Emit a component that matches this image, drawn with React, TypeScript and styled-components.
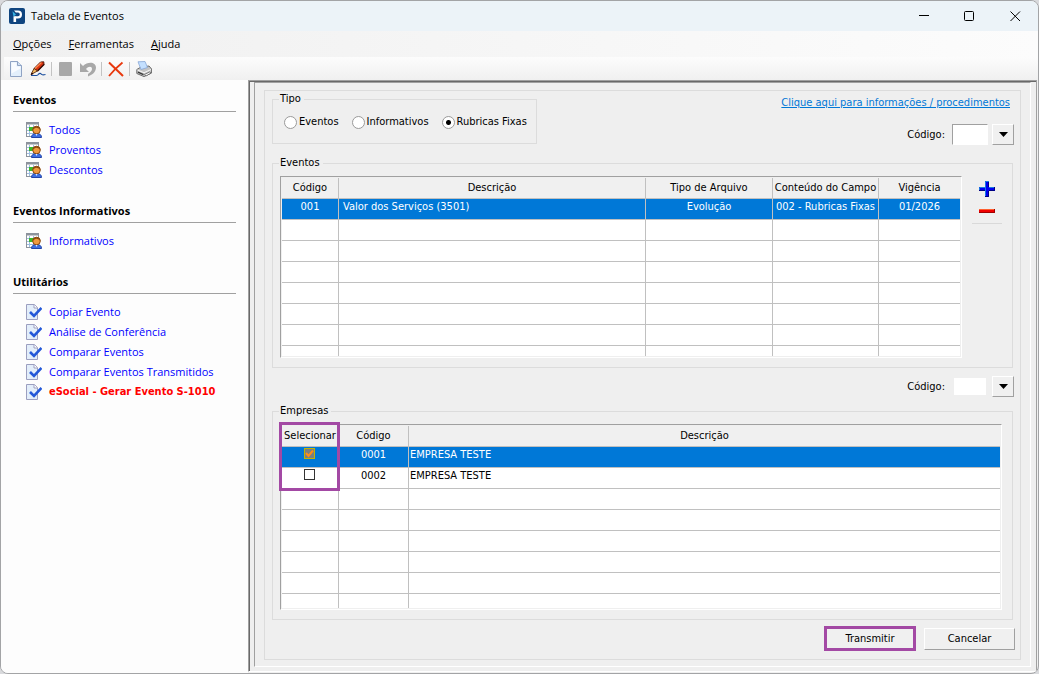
import React from 'react';
import styled, { createGlobalStyle, css } from 'styled-components';

const GlobalStyle = createGlobalStyle`
  * { box-sizing: border-box; }
  html, body { margin: 0; padding: 0; background: #d9dadd; }
  button, input, legend, table { font: inherit; color: inherit; }
`;

const uiFont = css`
  font-family: "Open Sans", "Noto Sans", sans-serif;
  font-size: 11px;
  line-height: 16px;
`;

const formFont = css`
  font-family: "DejaVu Sans Condensed", "DejaVu Sans", sans-serif;
  font-size: 11px;
  line-height: 16px;
`;

const Window = styled.div`
  ${uiFont}
  display: flex;
  flex-direction: column;
  min-height: 100vh;
  border: 1px solid #a3a4a6;
  border-radius: 8px;
  overflow: hidden;
  background: #f0f0f0;
  color: #000;
`;

const TitleBar = styled.header`
  display: flex;
  align-items: center;
  height: 30px;
  padding-left: 8px;
  background: #ecf3f8;
`;

const Title = styled.h1`
  flex: 1;
  margin: 0 0 0 6px;
  font-size: 11px;
  font-weight: 400;
`;

const PlainButton = styled.button`
  display: flex;
  align-items: center;
  justify-content: center;
  padding: 0;
  border: 0;
  background: transparent;
`;

const CaptionButton = styled(PlainButton)`
  width: 46px;
  height: 30px;
`;

const MenuBar = styled.nav`
  display: flex;
  gap: 17px;
  height: 26px;
  padding: 0 12px;
  background: linear-gradient(90deg, #f0f0f0, #fcfcfc);
`;

const MenuButton = styled(PlainButton)``;

const Toolbar = styled.div`
  display: flex;
  align-items: center;
  height: 23px;
  margin-left: 3px;
  padding-left: 1px;
  background: linear-gradient(#fcfcfc, #f0f0f0);
`;

const ToolButton = styled(PlainButton)`
  width: 22px;
  height: 22px;
`;

const ToolSeparator = styled.span`
  width: 1px;
  height: 14px;
  margin: 0 3px 0 2px;
  background: #c3c3c3;
`;

const Body = styled.div`
  display: flex;
  flex: 1;
`;

const Sidebar = styled.aside`
  display: flex;
  flex-direction: column;
  gap: 21px;
  flex: 0 0 247px;
  padding: 10px 12px;
  background: #fdfdfd;
`;

const SideHeading = styled.h2`
  margin: 0 0 8px;
  padding-bottom: 1px;
  border-bottom: 1px solid #a0a0a0;
  font-size: 11px;
  font-weight: 700;
  line-height: 20px;
`;

const SideList = styled.ul`
  margin: 0;
  padding: 0 0 0 13px;
  list-style: none;
`;

const SideLink = styled.a<{ $alert?: boolean }>`
  display: flex;
  align-items: center;
  gap: 7px;
  height: 20px;
  color: #0000ff;
  text-decoration: none;
  white-space: nowrap;
  ${(p) => p.$alert && css`
    color: #ff0000;
    font-family: "DejaVu Sans Condensed", "DejaVu Sans", sans-serif;
    font-weight: 700;
  `}
`;

const Main = styled.main`
  ${formFont}
  display: flex;
  flex: 1;
  min-width: 0;
  margin: 0 1px 1px 0;
  padding: 1px 5px 4px;
  border: 1px solid;
  border-color: #a0a0a0 #a0a0a0 #fff #a0a0a0;
  box-shadow: inset 1px 1px #696969;
  background: #efefef;
`;

const SunkenPanel = styled.div`
  flex: 1;
  min-width: 0;
  padding: 7px 9px 6px;
  border: 1px solid;
  border-color: #a0a0a0 #fff #fff #a0a0a0;
`;

const Form = styled.form`
  display: flex;
  flex-direction: column;
  height: 100%;
  padding: 0 5px 8px 7px;
  border: 1px solid #dcdcdc;
`;

const TopRow = styled.div`
  display: flex;
  justify-content: space-between;
  align-items: flex-start;
  margin-bottom: 10px;
`;

const Group = styled.fieldset`
  min-width: 0;
  margin: 0 2px 0 0;
  padding: 5px 10px 9px 7px;
  border: 1px solid #dcdcdc;
`;

const Legend = styled.legend`
  padding: 0 3px 0 1px;
  margin-left: -1px;
`;

const RadioGroup = styled(Group)`
  width: 265px;
  padding-bottom: 13px;
`;

const RadioRow = styled.div`
  display: flex;
  gap: 13px;
  padding: 2px 0 0 4px;
`;

const RadioLabel = styled.label`
  display: flex;
  align-items: center;
  gap: 2px;
  white-space: nowrap;
`;

const Radio = styled.input`
  appearance: none;
  width: 13px;
  height: 13px;
  margin: 0;
  border: 1px solid #9a9a9a;
  border-radius: 50%;
  background: #fff;
  &:checked { background: radial-gradient(circle, #000 2px, #fff 3px); }
`;

const TopRight = styled.div`
  display: flex;
  flex-direction: column;
  align-items: flex-end;
  gap: 13px;
  padding-top: 4px;
`;

const HelpLink = styled.a`
  margin-right: 5px;
  color: #0078d7;
  text-decoration: underline;
`;

const CodeRow = styled.div`
  display: flex;
  align-items: center;
  align-self: flex-end;
  margin-right: 1px;
`;

const CodeLabel = styled.label`
  margin-right: 7px;
`;

const CodeInput = styled.input<{ $flat?: boolean }>`
  width: 36px;
  height: 21px;
  margin-right: 4px;
  padding: 0 2px;
  border: 1px solid;
  border-color: #a0a0a0 #fff #fff #a0a0a0;
  background: #fff;
  ${(p) => p.$flat && css`
    border: 2px solid #efefef;
  `}
`;

const RaisedButton = styled(PlainButton)`
  border: 1px solid;
  border-color: #fff #a0a0a0 #a0a0a0 #fff;
  background: #f0f0f0;
`;

const DropButton = styled(RaisedButton)`
  width: 22px;
  height: 21px;
`;

const SecondCode = styled.div`
  display: flex;
  justify-content: flex-end;
  margin: 8px 0 6px;
`;

const GridArea = styled.div`
  display: flex;
  gap: 10px;
`;

const GridFrame = styled.div`
  position: relative;
  flex: 1;
  min-width: 0;
  padding: 1px;
  border: 1px solid;
  border-color: #a0a0a0 #fff #fff #a0a0a0;
`;

const Grid = styled.table`
  width: 100%;
  table-layout: fixed;
  border-collapse: separate;
  border-spacing: 0;
  background: #fff;
`;

const HeadCell = styled.th<{ $w?: number }>`
  width: ${(p) => (p.$w ? `${p.$w}px` : 'auto')};
  height: 21px;
  padding: 0;
  border: solid #c0c0c0;
  border-width: 0 1px 1px 0;
  background: #f0f0f0;
  font-weight: 400;
  white-space: nowrap;
  &:last-child { border-right: 0; }
`;

const Row = styled.tr<{ $selected?: boolean }>`
  background: ${(p) => (p.$selected ? '#0078d7' : '#fff')};
  color: ${(p) => (p.$selected ? '#fff' : '#000')};
`;

const Cell = styled.td<{ $align?: 'left' | 'center'; $indent?: number; $h?: number }>`
  height: ${(p) => p.$h ?? 21}px;
  padding: 0 0 0 ${(p) => p.$indent ?? 0}px;
  border: solid #c0c0c0;
  border-width: 0 1px ${(p) => (p.$h ? 0 : 1)}px 0;
  text-align: ${(p) => p.$align ?? 'center'};
  vertical-align: top;
  white-space: nowrap;
  &:last-child { border-right: 0; }
`;

const CheckWrap = styled.span`
  display: grid;
  justify-content: center;
  padding: 1px 1px 0 0;
  & > * { grid-area: 1 / 1; }
  & > svg { pointer-events: none; }
`;

const Check = styled.input`
  appearance: none;
  display: block;
  width: 11px;
  height: 11px;
  margin: 0;
  border: 1px solid #333;
  background: #fff;
  &:checked {
    border-color: #c4b400;
    background: #7a7f80;
  }
`;

const ColumnHighlight = styled.div`
  position: absolute;
  left: -2px;
  top: -3px;
  width: 61px;
  height: 69px;
  border: 3px solid #a349a4;
  pointer-events: none;
`;

const SideTools = styled.div`
  display: flex;
  flex-direction: column;
  align-items: center;
  gap: 12px;
  width: 30px;
  height: 48px;
  padding-top: 5px;
  border-bottom: 1px solid #d9d9d9;
`;

const Actions = styled.div`
  display: flex;
  justify-content: flex-end;
  align-items: center;
  gap: 8px;
  margin-top: 6px;
`;

const CommandButton = styled(RaisedButton)<{ $marked?: boolean }>`
  width: ${(p) => (p.$marked ? 92 : 91)}px;
  height: ${(p) => (p.$marked ? 25 : 22)}px;
  ${(p) => p.$marked && css`
    border: 3px solid #a349a4;
  `}
`;

const Logo = () => (
  <svg width="16" height="16" viewBox="0 0 16 16">
    <rect width="16" height="16" rx="2" fill="#0f4580" />
    <path d="M4.5 14V8.2h2.6V14z" fill="#fff" />
    <path d="M5 2.5h4a4 4 0 0 1 0 8H6.5V8.2H9a1.8 1.8 0 0 0 0-3.6H6.8z" fill="#fff" />
    <path d="M3.5 3.2 7 6.6 4.5 8.6z" fill="#39b5e6" />
  </svg>
);

const NewIcon = () => (
  <svg width="16" height="16" viewBox="0 0 16 16">
    <path d="M2.5.5h7l4 4v11h-11z" fill="#e3effb" stroke="#8fa3c4" />
    <path d="M3.5 1.5h5v4h4v2l-9 5z" fill="#f8fbff" />
    <path d="M9.500.5v4h4" fill="#cfdff2" stroke="#8fa3c4" />
  </svg>
);

const EditIcon = () => (
  <svg width="16" height="16" viewBox="0 0 16 16">
    <path d="M4 7.500 10.500 1 13.800.8l.2 2.700L7.500 10z" fill="#d8330f" stroke="#4a1408" strokeWidth=".9" />
    <path d="M5 7.500 11.500 1.500" stroke="#ff8a50" strokeWidth="1.200" />
    <path d="M7.500 10 14.200 3.200" stroke="#3a0f08" strokeWidth="1.400" />
    <path d="M4 7.500 1 13.500 7.500 10z" fill="#f0b860" stroke="#5b2a10" strokeWidth=".9" />
    <path d="m.8 14 1-2.500 1.800 1.500z" fill="#200" />
    <path d="M1 14.500h5.500c2.500 0 1.500-2.200 3.500-2.200s0 2.700 5.500 1.200" fill="none" stroke="#1c4f9e" strokeWidth="1.200" />
  </svg>
);

const StopIcon = () => (
  <svg width="16" height="16" viewBox="0 0 16 16">
    <rect x="1" y="1" width="13" height="14" rx="1" fill="#a8a8a8" />
  </svg>
);

const UndoIcon = () => (
  <svg width="16" height="16" viewBox="0 0 16 16">
    <path d="M0 2v9h9L6 8c2.500-3 6-3 6 0 0 2-1.500 3.200-4 5v2.500c4-1.500 8-4.500 8-9C16 1 8 0 3 5z" fill="#a8a8a8" />
  </svg>
);

const DeleteIcon = () => (
  <svg width="16" height="16" viewBox="0 0 16 16">
    <path d="M1 1.500 15 15" stroke="#e8380d" strokeWidth="2" />
    <path d="M14.500 1.500C9 6 5 10 1 15" stroke="#e8380d" strokeWidth="1.800" fill="none" />
  </svg>
);

const PrintIcon = () => (
  <svg width="16" height="16" viewBox="0 0 16 16">
    <path d="M.8 8.500 5 6l8-1 2.600 3v4L8 15.600.8 12.500z" fill="#c4c4c4" stroke="#606060" strokeWidth=".9" />
    <path d="M2 .8 9 .5l2.500 6-6.500 2z" fill="#c4e0ff" stroke="#86a6d6" strokeWidth=".8" />
    <path d="M1.500 9 8 11.800 15 8.500" fill="none" stroke="#f8f8f8" />
    <path d="M2 11.200 7.500 13.600" stroke="#383838" strokeWidth="1.300" />
    <path d="m8.500 13.500 5-2.500 1.500 1-5 3z" fill="#f4f4f4" stroke="#555" strokeWidth=".7" />
  </svg>
);

const PersonGridIcon = () => (
  <svg width="16" height="16" viewBox="0 0 16 16">
    <rect x=".5" y=".5" width="12" height="14" fill="#fff" stroke="#8d939c" />
    <path d="M0 1.500h13" stroke="#8d939c" strokeWidth="2" />
    <path d="M1 5.500h11M1 8.500h11M1 11.500h11M3.500 3v11M7.500 3v11" stroke="#9dbce0" />
    <rect x="3" y="5" width="4" height="4" fill="#3cb828" />
    <path d="M5.500 15.500c0-3 2-4 5-4s5 1 5 4z" fill="#3c6fe0" stroke="#2444a8" />
    <circle cx="10.500" cy="8" r="3.800" fill="#f09a3e" stroke="#8c4a10" />
    <path d="M6.500 8c0-5 8-5 8 0-2-1.500-3.500-2.500-5-2-1 .2-1.500 1-3 2z" fill="#8c4a10" />
    <path d="M9.500 12h2l-1 2z" fill="#dce8ff" />
  </svg>
);

const DocCheckIcon = () => (
  <svg width="16" height="16" viewBox="0 0 16 16">
    <path d="M.5.5h8l3 3v12H.5z" fill="#e3eefa" stroke="#9c9fc0" />
    <path d="M8 .5v3.500h3.500" fill="#fff" stroke="#9c9fc0" />
    <path d="m4 8 4 4 7.500-8" fill="none" stroke="#2458d8" strokeWidth="2.600" />
  </svg>
);

const DownArrow = () => (
  <svg width="9" height="5" viewBox="0 0 9 5">
    <path d="M0 0h9L4.500 5z" fill="#000" />
  </svg>
);

type LinkItem = { text: string; alert?: boolean };
type Section = { title: string; icon: React.FC; items: LinkItem[] };

const sections: Section[] = [
  {
    title: 'Eventos',
    icon: PersonGridIcon,
    items: [{ text: 'Todos' }, { text: 'Proventos' }, { text: 'Descontos' }],
  },
  { title: 'Eventos Informativos', icon: PersonGridIcon, items: [{ text: 'Informativos' }] },
  {
    title: 'Utilitários',
    icon: DocCheckIcon,
    items: [
      { text: 'Copiar Evento' },
      { text: 'Análise de Conferência' },
      { text: 'Comparar Eventos' },
      { text: 'Comparar Eventos Transmitidos' },
      { text: 'eSocial - Gerar Evento S-1010', alert: true },
    ],
  },
];

const companies = [
  { code: '0001', name: 'EMPRESA TESTE', selected: true },
  { code: '0002', name: 'EMPRESA TESTE', selected: false },
];

const EmptyRows = ({ count, columns, tail }: { count: number; columns: number; tail: number }) => (
  <>
    {Array.from({ length: count + 1 }, (_, r) => (
      <Row key={r}>
        {Array.from({ length: columns }, (_, c) => (
          <Cell key={c} $h={r === count ? tail : undefined} />
        ))}
      </Row>
    ))}
  </>
);

const CodeField = ({ id, flat }: { id: string; flat?: boolean }) => (
  <CodeRow>
    <CodeLabel htmlFor={id}>Código:</CodeLabel>
    <CodeInput id={id} type="text" $flat={flat} />
    <DropButton type="button" aria-label="Pesquisar código"><DownArrow /></DropButton>
  </CodeRow>
);

export default function App() {
  return (
    <>
      <GlobalStyle />
      <Window>
        <TitleBar>
          <Logo />
          <Title>Tabela de Eventos</Title>
          <CaptionButton type="button" aria-label="Minimizar">
            <svg width="11" height="11"><path d="M1 4.500h10" stroke="#000" /></svg>
          </CaptionButton>
          <CaptionButton type="button" aria-label="Maximizar">
            <svg width="11" height="11"><rect x=".5" y=".5" width="9" height="9" rx="1" fill="none" stroke="#000" /></svg>
          </CaptionButton>
          <CaptionButton type="button" aria-label="Fechar">
            <svg width="11" height="11"><path d="m.5.5 9.500 9.500m0-9.500-9.500 9.500" stroke="#000" /></svg>
          </CaptionButton>
        </TitleBar>

        <MenuBar>
          {['Opções', 'Ferramentas', 'Ajuda'].map((m) => (
            <MenuButton key={m} type="button"><span><u>{m[0]}</u>{m.slice(1)}</span></MenuButton>
          ))}
        </MenuBar>

        <Toolbar>
          <ToolButton type="button" aria-label="Novo"><NewIcon /></ToolButton>
          <ToolButton type="button" aria-label="Editar"><EditIcon /></ToolButton>
          <ToolSeparator />
          <ToolButton type="button" aria-label="Gravar"><StopIcon /></ToolButton>
          <ToolButton type="button" aria-label="Desfazer"><UndoIcon /></ToolButton>
          <ToolSeparator />
          <ToolButton type="button" aria-label="Excluir"><DeleteIcon /></ToolButton>
          <ToolSeparator />
          <ToolButton type="button" aria-label="Imprimir"><PrintIcon /></ToolButton>
        </Toolbar>

        <Body>
          <Sidebar>
            {sections.map(({ title, icon: Icon, items }) => (
              <section key={title}>
                <SideHeading>{title}</SideHeading>
                <SideList>
                  {items.map((item) => (
                    <li key={item.text}>
                      <SideLink href="#" $alert={item.alert}><Icon />{item.text}</SideLink>
                    </li>
                  ))}
                </SideList>
              </section>
            ))}
          </Sidebar>

          <Main>
            <SunkenPanel>
              <Form>
                <TopRow>
                  <RadioGroup>
                    <Legend>Tipo</Legend>
                    <RadioRow>
                      {['Eventos', 'Informativos', 'Rubricas Fixas'].map((t) => (
                        <RadioLabel key={t}>
                          <Radio type="radio" name="tipo" defaultChecked={t === 'Rubricas Fixas'} />
                          {t}
                        </RadioLabel>
                      ))}
                    </RadioRow>
                  </RadioGroup>
                  <TopRight>
                    <HelpLink href="#">Clique aqui para informações / procedimentos</HelpLink>
                    <CodeField id="codigo-evento" />
                  </TopRight>
                </TopRow>

                <Group>
                  <Legend>Eventos</Legend>
                  <GridArea>
                    <GridFrame>
                      <Grid>
                        <thead>
                          <tr>
                            <HeadCell $w={57}>Código</HeadCell>
                            <HeadCell>Descrição</HeadCell>
                            <HeadCell $w={127}>Tipo de Arquivo</HeadCell>
                            <HeadCell $w={106}>Conteúdo do Campo</HeadCell>
                            <HeadCell $w={81}>Vigência</HeadCell>
                          </tr>
                        </thead>
                        <tbody>
                          <Row $selected>
                            <Cell>001</Cell>
                            <Cell $align="left" $indent={4}>Valor dos Serviços (3501)</Cell>
                            <Cell>Evolução</Cell>
                            <Cell>002 - Rubricas Fixas</Cell>
                            <Cell>01/2026</Cell>
                          </Row>
                          <EmptyRows count={6} columns={5} tail={10} />
                        </tbody>
                      </Grid>
                    </GridFrame>
                    <SideTools>
                      <PlainButton type="button" aria-label="Adicionar">
                        <svg width="16" height="16">
                          <path d="M6 0h4v6h6v4h-6v6H6v-6H0V6h6z" fill="#0000f0" />
                          <path d="M6.500 16V.5H10M.5 10V6.500H6M10 6.500h6" fill="none" stroke="#1a7ae0" />
                          <path d="M9.500 1v5M9.500 10v5.500H6M0 9.500h6M10 9.500h5.500V6" fill="none" stroke="#000080" />
                        </svg>
                      </PlainButton>
                      <PlainButton type="button" aria-label="Remover">
                        <svg width="16" height="4">
                          <rect width="16" height="4" fill="#f00000" />
                          <path d="M0 .5h16" stroke="#ff6030" />
                          <path d="M0 3.500h15.500V0" fill="none" stroke="#a00000" />
                        </svg>
                      </PlainButton>
                    </SideTools>
                  </GridArea>
                </Group>

                <SecondCode><CodeField id="codigo-empresa" flat /></SecondCode>

                <Group>
                  <Legend>Empresas</Legend>
                  <GridFrame>
                    <Grid>
                      <thead>
                        <tr>
                          <HeadCell $w={57}>Selecionar</HeadCell>
                          <HeadCell $w={70}>Código</HeadCell>
                          <HeadCell>Descrição</HeadCell>
                        </tr>
                      </thead>
                      <tbody>
                        {companies.map((c) => (
                          <Row key={c.code} $selected={c.selected}>
                            <Cell>
                              <CheckWrap>
                                <Check type="checkbox" aria-label={`Selecionar ${c.code}`} defaultChecked={c.selected} />
                                {c.selected && (
                                  <svg width="11" height="11"><path d="m2 5 2.500 3L9 2.500" fill="none" stroke="#ff8c1a" strokeWidth="2" /></svg>
                                )}
                              </CheckWrap>
                            </Cell>
                            <Cell>{c.code}</Cell>
                            <Cell $align="left" $indent={1}>{c.name}</Cell>
                          </Row>
                        ))}
                        <EmptyRows count={5} columns={3} tail={14} />
                      </tbody>
                    </Grid>
                    <ColumnHighlight />
                  </GridFrame>
                </Group>

                <Actions>
                  <CommandButton type="button" $marked>Transmitir</CommandButton>
                  <CommandButton type="button">Cancelar</CommandButton>
                </Actions>
              </Form>
            </SunkenPanel>
          </Main>
        </Body>
      </Window>
    </>
  );
}
